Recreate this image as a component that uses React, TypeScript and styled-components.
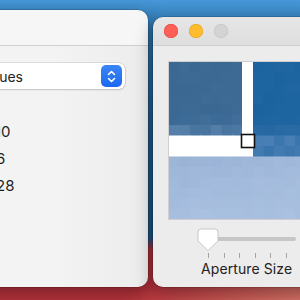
import styled, { createGlobalStyle } from 'styled-components';

const GlobalStyle = createGlobalStyle`
  html, body {
    margin: 0;
    padding: 0;
    overflow: hidden;
  }
  body {
    font-family: Inter, "Liberation Sans", sans-serif;
    -webkit-font-smoothing: antialiased;
  }
`;

const Desktop = styled.div`
  position: relative;
  width: 300px;
  height: 300px;
  overflow: hidden;
  background:
    linear-gradient(150deg, transparent 78%, rgba(226, 140, 120, 0.7) 100%),
    linear-gradient(180deg, #4797d9 0px, #2f77b0 28px, #225f92 120px, #1b5586 238px, #b3303a 250px, #b6323b 300px);
`;

/* windows sit on a free desktop, so they are placed absolutely */
const Window = styled.div<{ $left: number; $top: number; $width: number; $height: number }>`
  position: absolute;
  left: ${(p) => p.$left}px;
  top: ${(p) => p.$top}px;
  width: ${(p) => p.$width}px;
  height: ${(p) => p.$height}px;
  border-radius: 10px;
  overflow: hidden;
  display: flex;
  flex-direction: column;
  box-shadow: 0 0 0 0.5px rgba(0, 0, 0, 0.25), 0 6px 18px rgba(0, 0, 0, 0.35);
`;

const TitleBar = styled.div<{ $height: number; $bg: string }>`
  height: ${(p) => p.$height}px;
  flex-shrink: 0;
  background: ${(p) => p.$bg};
  border-bottom: 1px solid #cfcfcf;
  display: flex;
  align-items: center;
  gap: 11px;
  padding-left: 11px;
`;

const Light = styled.span<{ $color: string; $ring: string }>`
  width: 14px;
  height: 14px;
  border-radius: 50%;
  background: ${(p) => p.$color};
  box-shadow: inset 0 0 0 0.5px ${(p) => p.$ring};
`;

const LeftBody = styled.div`
  flex: 1;
  background: linear-gradient(90deg, #f3f3f3 70%, #ececec 100%);
  padding: 17px 0 0 0;
  display: flex;
  flex-direction: column;
  align-items: flex-end;
`;

const PopUp = styled.div`
  width: 260px;
  height: 26px;
  margin-right: 23px;
  box-sizing: border-box;
  background: #fff;
  border-radius: 6px;
  box-shadow: 0 0 0 0.5px rgba(0, 0, 0, 0.18), 0 1px 2px rgba(0, 0, 0, 0.12);
  display: flex;
  align-items: center;
  justify-content: space-between;
  padding: 0 3px 0 0;
  font-size: 14px;
  color: #222;
`;

const PopLabel = styled.span`
  margin-left: auto;
  margin-right: 78px;
`;

const Stepper = styled.span`
  width: 21px;
  height: 22px;
  border-radius: 5px;
  background: linear-gradient(180deg, #3c86f7, #1b68f0);
  display: flex;
  align-items: center;
  justify-content: center;
`;

const Values = styled.div`
  align-self: stretch;
  display: flex;
  flex-direction: column;
  gap: 8px;
  padding-top: 33px;
  padding-left: 160px;
`;

const Value = styled.div<{ $indent: number }>`
  font-size: 15px;
  line-height: 19px;
  color: #1e1e1e;
  text-indent: ${(p) => p.$indent}px;
  white-space: nowrap;
`;

const RightBody = styled.div`
  flex: 1;
  background: #ececec;
  padding: 16px 0 0 16px;
  display: flex;
  flex-direction: column;
`;

const Loupe = styled.div`
  width: 160px;
  height: 157px;
  box-shadow: 0 0 0 1px rgba(0, 0, 0, 0.12);
  line-height: 0;
`;

const SliderBox = styled.div`
  position: relative;
  margin-top: 9px;
  margin-left: 29px;
  width: 98px;
  height: 32px;
`;

const Track = styled.div`
  position: absolute;
  left: 4px;
  right: 0;
  top: 9px;
  height: 4px;
  border-radius: 2px;
  background: #c6c6c6;
`;

const Thumb = styled.svg`
  position: absolute;
  left: -1px;
  top: 0;
`;

const Ticks = styled.div`
  position: absolute;
  left: 10px;
  top: 25px;
  display: flex;
  gap: 14.6px;
`;

const Tick = styled.span`
  width: 1px;
  height: 5px;
  background: #a4a4a4;
`;

const Caption = styled.div`
  margin-left: 32px;
  font-size: 14px;
  color: #222;
  letter-spacing: 0.1px;
`;

function pseudo(i: number, j: number) {
  const s = Math.sin(i * 12.9898 + j * 78.233) * 43758.5453;
  return s - Math.floor(s);
}

function mix(a: number[], b: number[], t: number) {
  return `rgb(${a.map((v, k) => Math.round(v + (b[k] - v) * t)).join(',')})`;
}

function cellColor(x: number, y: number, r: number) {
  // x, y are the cell's pixel origin inside the loupe
  if (y < 74) {
    if (x < 73) {
      if (y >= 63) return mix([72, 116, 160], [86, 128, 170], r);
      if (y >= 52) return mix([60, 106, 150], [66, 111, 154], r);
      return mix([58, 104, 146], [61, 107, 149], r);
    }
    if (y >= 63) return mix([32, 100, 160], [44, 108, 166], r);
    return mix([26, 99, 159], [31, 102, 161], r);
  }
  if (y < 85) {
    if (x >= 84) return mix([56, 116, 172], [74, 128, 180], r);
    return '#fff';
  }
  const t = Math.min(1, (y - 85) / 70 + x / 400);
  return mix([152, 177, 212], [170, 193, 225], t * 0.8 + r * 0.2);
}

function LoupeImage() {
  const cells = [];
  const size = 10.5;
  for (let j = 0; j < 15; j++) {
    for (let i = 0; i < 16; i++) {
      const x = i * size;
      const y = j * size;
      const cy = y < 74 && y + size > 74 ? 74 : y;
      cells.push(
        <rect key={`${i}-${j}`} x={x} y={y} width={size + 0.5} height={size + 0.5} fill={cellColor(x, cy, pseudo(i, j))} />
      );
    }
  }
  return (
    <svg width="160" height="157" viewBox="0 0 160 157">
      {cells}
      <rect x="0" y="74" width="73" height="11" fill="#fff" />
      <rect x="73" y="0" width="11" height="85" fill="#fff" />
      <rect x="72.5" y="72.5" width="13" height="13" fill="#fff" stroke="#111" strokeWidth="1.6" />
    </svg>
  );
}

export default function App() {
  return (
    <Desktop>
      <GlobalStyle />
      <Window $left={-160} $top={10} $width={308} $height={277}>
        <TitleBar $height={35} $bg="#f6f6f6" />
        <LeftBody>
          <PopUp>
            <PopLabel>Values</PopLabel>
            <Stepper>
              <svg width="11" height="15" viewBox="0 0 11 15">
                <path d="M2.5 5.5 L5.5 2.5 L8.5 5.5 M2.5 9.5 L5.5 12.5 L8.5 9.5" fill="none" stroke="#fff" strokeWidth="1.6" strokeLinecap="round" strokeLinejoin="round" />
              </svg>
            </Stepper>
          </PopUp>
          <Values>
            <Value $indent={-5}>10</Value>
            <Value $indent={-10}>16</Value>
            <Value $indent={-10}>128</Value>
          </Values>
        </LeftBody>
      </Window>
      <Window $left={153} $top={17} $width={170} $height={270}>
        <TitleBar $height={28} $bg="linear-gradient(180deg, #e6e6e6, #dedede)">
          <Light $color="#fe5f57" $ring="#e0443e" />
          <Light $color="#febc2e" $ring="#dea123" />
          <Light $color="#d3d3d3" $ring="#c2c2c2" />
        </TitleBar>
        <RightBody>
          <Loupe>
            <LoupeImage />
          </Loupe>
          <SliderBox>
            <Track />
            <Thumb width="22" height="24" viewBox="0 0 22 24">
              <path d="M4 1 H18 a3 3 0 0 1 3 3 V13 L11 22.5 L1 13 V4 a3 3 0 0 1 3 -3 Z" fill="#fff" stroke="#bdbdbd" strokeWidth="0.8" />
            </Thumb>
            <Ticks>
              {[0, 1, 2, 3, 4, 5].map((n) => (
                <Tick key={n} />
              ))}
            </Ticks>
          </SliderBox>
          <Caption>Aperture Size</Caption>
        </RightBody>
      </Window>
    </Desktop>
  );
}
